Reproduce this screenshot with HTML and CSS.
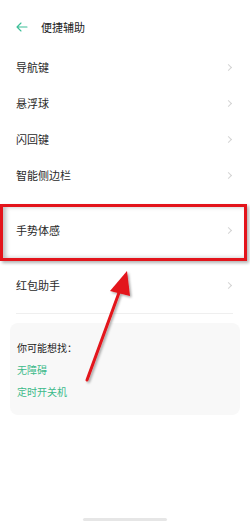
FILE: index.html
```html
<!DOCTYPE html>
<html lang="zh">
<head>
<meta charset="utf-8">
<link rel="stylesheet" href="styles.css">
</head>
<body>
<div class="screen">
  <header class="header">
    <svg class="back" width="12" height="10" viewBox="0 0 12 10"><path d="M11 5H1.5M5 1L1 5l4 4" fill="none" stroke="#3cbf98" stroke-width="1.1" stroke-linecap="round" stroke-linejoin="round"/></svg>
    <span class="title">便捷辅助</span>
  </header>
  <ul class="list">
    <li class="row"><span>导航键</span><i class="chev"></i></li>
    <li class="row"><span>悬浮球</span><i class="chev"></i></li>
    <li class="row"><span>闪回键</span><i class="chev"></i></li>
    <li class="row"><span>智能侧边栏</span><i class="chev"></i></li>
    <li class="row row-gap"><span>手势体感</span><i class="chev"></i></li>
    <li class="row row-gap"><span>红包助手</span><i class="chev"></i></li>
  </ul>
  <div class="divider"></div>
  <section class="card">
    <p class="card-title">你可能想找：</p>
    <p class="link">无障碍</p>
    <p class="link">定时开关机</p>
  </section>
  <div class="home-bar"></div>

  <div class="highlight"></div>
  <svg class="pointer" width="250" height="522" viewBox="0 0 250 522">
    <defs>
      <filter id="sh" x="-50%" y="-50%" width="200%" height="200%">
        <feDropShadow dx="1.5" dy="1.5" stdDeviation="1" flood-color="#000" flood-opacity="0.35"/>
      </filter>
    </defs>
    <g filter="url(#sh)">
      <path d="M87 380 L120 290" stroke="#e3141b" stroke-width="3" stroke-linecap="round"/>
      <path d="M127 271 L110 291 L130 296 Z" fill="#e3141b"/>
    </g>
  </svg>
</div>
</body>
</html>
```
FILE: styles.css
```css
* { box-sizing: border-box; }
html, body {
  margin: 0;
  padding: 0;
  background: #fff;
}
body {
  font-family: "Noto Sans CJK SC", "Noto Sans", sans-serif;
  color: #2b2b2b;
}
.screen {
  position: relative;
  width: 250px;
  height: 522px;
  overflow: hidden;
  background: #fff;
}
.header {
  display: flex;
  align-items: center;
  height: 54px;
  padding: 0 0 0 16px;
}
.back {
  display: block;
  margin-right: 13px;
}
.title {
  font-size: 11px;
  line-height: 16px;
  color: #222;
}
.list {
  list-style: none;
  margin: -5px 0 0;
  padding: 0;
}
.row {
  display: flex;
  align-items: center;
  justify-content: space-between;
  height: 36px;
  padding: 0 19px 0 16px;
  font-size: 11px;
  color: #2a2a2a;
}
.row-gap { margin-top: 19px; }
.chev {
  display: block;
  width: 5px;
  height: 5px;
  border-top: 1px solid #d4d4d4;
  border-right: 1px solid #d4d4d4;
  transform: rotate(45deg);
}
.divider {
  height: 1px;
  margin: 10px 17px 0 16px;
  background: #efefef;
}
.card {
  margin: 9px 10px 0;
  height: 92px;
  padding: 14px 7px 0;
  background: #f8f8f8;
  border-radius: 8px;
}
.card p {
  margin: 0;
  font-size: 10px;
  line-height: 22px;
}
.card-title { color: #222; }
.link { color: #3cba8a; }
.home-bar {
  position: absolute;
  left: 83px;
  bottom: 1px;
  width: 84px;
  height: 3px;
  border-radius: 2px;
  background: #e6e6e6;
}
.highlight {
  position: absolute;
  left: 0;
  top: 204px;
  width: 247px;
  height: 57px;
  border: 3px solid #e3141b;
  box-shadow: 2px 2px 3px rgba(0,0,0,0.3), inset 3px 0 4px rgba(0,0,0,0.25);
}
.pointer {
  position: absolute;
  left: 0;
  top: 0;
}
```
